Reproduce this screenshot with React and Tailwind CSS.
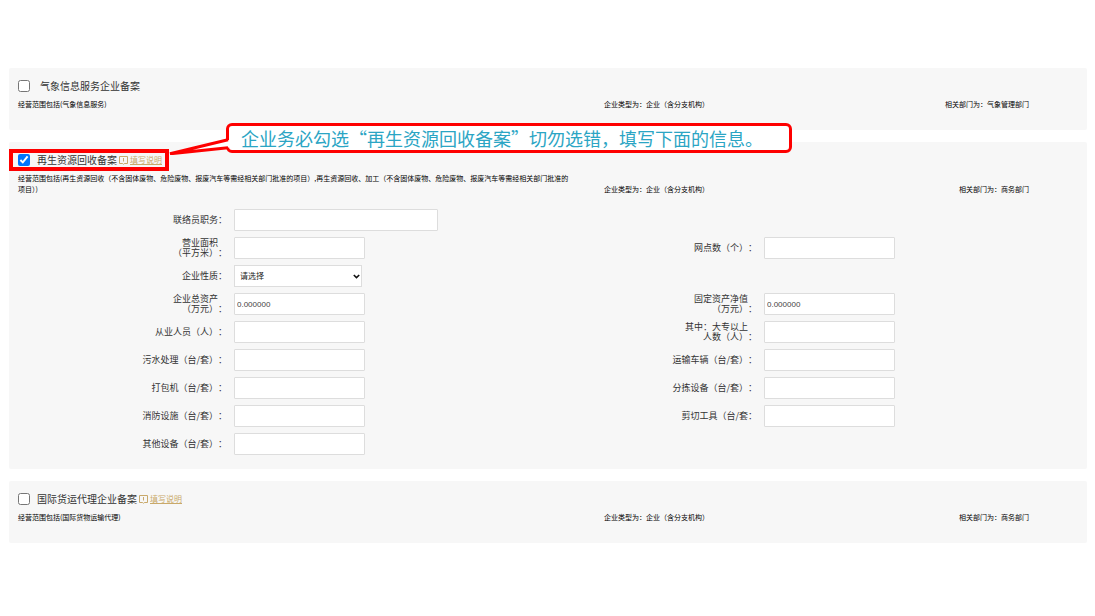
import { useState } from "react";

const fieldRows = [
  [{ name: "contactTitle", label: ["联络员职务"], size: "wide" }, null],
  [
    { name: "area", label: ["营业面积", "（平方米）"] },
    { name: "outlets", label: ["网点数（个）"] },
  ],
  [{ name: "nature", label: ["企业性质"], type: "select" }, null],
  [
    { name: "totalAssets", label: ["企业总资产", "（万元）"], value: "0.000000" },
    { name: "netAssets", label: ["固定资产净值", "（万元）"], value: "0.000000" },
  ],
  [
    { name: "staff", label: ["从业人员（人）"] },
    { name: "graduates", label: ["其中：大专以上", "人数（人）"] },
  ],
  [
    { name: "sewage", label: ["污水处理（台/套）"] },
    { name: "vehicles", label: ["运输车辆（台/套）"] },
  ],
  [
    { name: "baler", label: ["打包机（台/套）"] },
    { name: "sorting", label: ["分拣设备（台/套）"] },
  ],
  [
    { name: "fire", label: ["消防设施（台/套）"] },
    { name: "cutting", label: ["剪切工具（台/套"] },
  ],
  [{ name: "other", label: ["其他设备（台/套）"] }, null],
];

const BookIcon = () => (
  <svg className="mx-[2px] h-[9px] w-[9px] shrink-0" viewBox="0 0 9 9" fill="none" stroke="#c9a96a">
    <path d="M0.5 0.5h8v7H5.3L4.5 8.4 3.7 7.5H0.5z" />
    <path d="M4.5 2v3.5" />
  </svg>
);

const Field = ({ field }) => {
  const [value, setValue] = useState(field.value || "");
  const id = `field-${field.name}`;
  const width = field.size === "wide" ? "w-[204px]" : "w-[131px]";

  return (
    <div className="flex h-[22px] items-center gap-[7px]">
      <label
        htmlFor={id}
        className="flex w-[209px] shrink-0 items-end justify-end text-[9px] leading-[10px] text-[#333]"
      >
        <span className="text-right">
          {field.label.map((line) => (
            <span key={line} className="block">
              {line}
            </span>
          ))}
        </span>
        <span>：</span>
      </label>
      {field.type === "select" ? (
        <div className="relative">
          <select
            id={id}
            value={value}
            onChange={(e) => setValue(e.target.value)}
            className="block h-[22px] w-32 appearance-none border border-[#ddd] bg-white px-[5px] text-[8px] text-[#222]"
          >
            <option value="">请选择</option>
          </select>
          <svg
            className="pointer-events-none absolute right-[2px] top-[9px] h-[5px] w-[7px]"
            viewBox="0 0 7 5"
            fill="none"
            stroke="#111"
            strokeWidth="1.6"
          >
            <path d="M0.8 1l2.7 2.6L6.2 1" />
          </svg>
        </div>
      ) : (
        <input
          id={id}
          type="text"
          value={value}
          onChange={(e) => setValue(e.target.value)}
          className={`h-[22px] rounded-[1px] border border-[#ddd] bg-white px-[2px] font-['Liberation_Sans',sans-serif] text-[8px] text-[#444] ${width}`}
        />
      )}
    </div>
  );
};

const RecordPanel = ({ id, title, scope, department, help, highlight, wideGap, defaultChecked, children }) => {
  const [checked, setChecked] = useState(Boolean(defaultChecked));

  return (
    <section className="relative rounded-[2px] bg-[#f7f7f7] px-[9px] pt-3">
      <div className="relative flex h-3 w-fit items-center">
        <input
          id={id}
          type="checkbox"
          checked={checked}
          onChange={(e) => setChecked(e.target.checked)}
          className="h-3 w-3 shrink-0"
        />
        <label
          htmlFor={id}
          className={`text-[10px] leading-3 text-[#333] ${wideGap ? "ml-[10px]" : "ml-[7px]"}`}
        >
          {title}
        </label>
        {help && (
          <>
            <BookIcon />
            <a href="#help" className="text-[8px] leading-3 text-[#c9a96a] underline">
              填写说明
            </a>
          </>
        )}
        {highlight && (
          <span className="pointer-events-none absolute -inset-y-[5px] -left-[9px] -right-[7px] border-4 border-[#fe0000]" />
        )}
      </div>

      <div className="mt-[7px] flex items-end text-[7px] leading-[11px] text-black">
        <p className="w-[586px] shrink-0 whitespace-pre-line">{scope}</p>
        <p>企业类型为：企业（含分支机构）</p>
        <p className="ml-auto mr-[49px]">相关部门为：{department}</p>
      </div>
      {children}
    </section>
  );
};

const Callout = () => (
  <div className="pointer-events-none absolute -top-[19px] left-[160px] flex">
    <svg className="relative z-10 -mr-[3px] mt-3 h-5 w-[60px] shrink-0" viewBox="0 0 60 20">
      <path d="M60 5L0 19.5L60 12.5z" fill="#fff" />
      <path d="M59 4.8L1 18.8L59 12.8" fill="none" stroke="#fe0000" strokeWidth="3" strokeLinejoin="bevel" />
    </svg>
    <p className="h-[30px] w-[566px] whitespace-nowrap rounded-md border-[3px] border-[#fe0000] bg-white pl-3 text-lg leading-6 text-[#2ba5c4]">
      企业务必勾选“再生资源回收备案”切勿选错，填写下面的信息。
    </p>
  </div>
);

const App = () => {
  return (
    <main
      lang="zh-CN"
      className="flex min-h-screen flex-col gap-3 bg-white pb-[73px] pl-[9px] pr-2 pt-[68px] font-['Noto_Sans_CJK_SC',sans-serif]"
    >
      <RecordPanel
        id="weather"
        title="气象信息服务企业备案"
        scope="经营范围包括(气象信息服务)"
        department="气象管理部门"
        wideGap
      >
        <div className="h-5" />
      </RecordPanel>

      <RecordPanel
        id="recycling"
        title="再生资源回收备案"
        scope={
          "经营范围包括(再生资源回收（不含固体废物、危险废物、报废汽车等需经相关部门批准的项目）,再生资源回收、加工（不含固体废物、危险废物、报废汽车等需经相关部门批准的\n项目）)"
        }
        department="商务部门"
        help
        highlight
        defaultChecked
      >
        <form className="mt-[14px] flex flex-col gap-[6px] pb-[14px]">
          {fieldRows.map(([left, right]) => (
            <div key={left.name} className="grid grid-cols-2">
              <Field field={left} />
              {right && <Field field={right} />}
            </div>
          ))}
        </form>
        <Callout />
      </RecordPanel>

      <RecordPanel
        id="freight"
        title="国际货运代理企业备案"
        scope="经营范围包括(国际货物运输代理)"
        department="商务部门"
        help
      >
        <div className="h-5" />
      </RecordPanel>
    </main>
  );
};

export default App;
